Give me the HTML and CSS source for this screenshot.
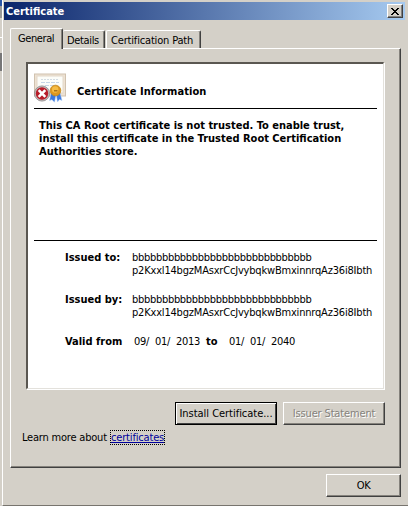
FILE: index.html
```html
<!DOCTYPE html>
<html lang="en">
<head>
<meta charset="utf-8">
<title>Certificate</title>
<link rel="stylesheet" href="styles.css">
</head>
<body>
<div class="behind"><i></i><i></i><i></i><i></i></div>
<main class="window">
  <header class="titlebar">
    <h1>Certificate</h1>
    <button class="close" aria-label="Close"><svg width="8" height="7" viewBox="0 0 8 7" shape-rendering="crispEdges"><path d="M0 0h2v1h1v1h2v-1h1v-1h2v1h-1v1h-1v1h-1v1h1v1h1v1h1v1h-2v-1h-1v-1h-2v1h-1v1h-2v-1h1v-1h1v-1h1v-1h-1v-1h-1v-1h-1z"/></svg></button>
  </header>
  <nav class="tabs">
    <div class="tab active"><span>General</span></div>
    <div class="tab details"><span>Details</span></div>
    <div class="tab path"><span>Certification Path</span></div>
  </nav>
  <section class="panel">
    <article class="sheet">
      <div class="heading">
        <svg class="cert" width="32" height="31" viewBox="0 0 32 31">
          <rect x=".5" y="1" width="31" height="22" fill="#eee2d3" stroke="#d0c2af"/>
          <rect x="3" y="3" width="26" height="17" fill="#fcfdf9" stroke="#e2d8ca"/>
          <path d="M7 6.500h18" stroke="#d3dce3" stroke-dasharray="2 1"/>
          <path d="M7 9.500h18M11 12.500h11" stroke="#c6d6e6" stroke-dasharray="4 1"/>
          <path d="M17 20l-1.500 7.500 2.500-.8 2.500 2.500 1.500-7zM22 21l1.500 8 2-2.500 2.500 1-2-8z" fill="#3978de" stroke="#bcd5f7" stroke-width=".5"/>
          <circle cx="21.500" cy="17.500" r="5.300" fill="#dc9720" stroke="#c48617" stroke-width=".8"/>
          <circle cx="21.200" cy="16.500" r="3.200" fill="#f5bd45"/>
          <path d="M20 17h3.500v1.500H20z" fill="#a87216"/>
          <circle cx="8" cy="20.500" r="7.600" fill="#c2bebe" stroke="#8c8586" stroke-width=".8"/>
          <circle cx="8" cy="20.500" r="6.200" fill="#b81d29"/>
          <path d="M4.700 17.200l6.600 6.600M11.300 17.200l-6.600 6.600" stroke="#fff" stroke-width="2.600"/>
        </svg>
        <h2>Certificate Information</h2>
      </div>
      <div class="warning">
        <p class="w1">This CA Root certificate is not trusted. To enable trust,</p>
        <p class="w2">install this certificate in the Trusted Root Certification</p>
        <p class="w3">Authorities store.</p>
      </div>
      <div class="details-list">
        <div class="field"><b class="to">Issued to:</b><div><p class="bs">bbbbbbbbbbbbbbbbbbbbbbbbbbbbbb</p><p class="key">p2Kxxl14bgzMAsxrCcJvybqkwBmxinnrqAz36i8Ibth</p></div></div>
        <div class="field"><b class="by">Issued by:</b><div><p class="bs">bbbbbbbbbbbbbbbbbbbbbbbbbbbbbb</p><p class="key">p2Kxxl14bgzMAsxrCcJvybqkwBmxinnrqAz36i8Ibth</p></div></div>
        <div class="valid"><b class="from">Valid from</b><span>09/</span><span>01/</span><span class="year">2013</span><b class="until">to</b><span>01/</span><span>01/</span><span class="year">2040</span></div>
      </div>
    </article>
    <div class="actions">
      <button class="btn default"><span class="install">Install Certificate...</span></button>
      <button class="btn" disabled><span class="issuer">Issuer Statement</span></button>
    </div>
    <p class="learn"><span class="more">Learn more about</span><a href="#"><span>certificates</span></a></p>
  </section>
  <button class="btn ok">OK</button>
</main>
</body>
</html>
```
FILE: styles.css
```css
* { box-sizing: border-box; margin: 0; padding: 0; }
body {
  width: 408px; height: 506px; overflow: hidden; display: flex;
  background: #d4d0c8; color: #000;
  font: 11px/13px "DejaVu Sans Condensed", "DejaVu Sans", sans-serif;
  font-stretch: condensed; white-space: nowrap;
}
.behind { width: 2px; background: #d4d0c8; }
.behind i { display: block; height: 6px; background: #2a55a5; }
.behind i + i { height: 12px; background: #999; }
.behind i + i + i { height: 1px; margin-top: 19px; background: #fff; }
.behind i + i + i + i { height: 18px; margin-top: 15px; background: #777; }
.window {
  width: 406px; height: 506px; display: flex; flex-direction: column;
  padding: 1px 4px 0 1px; border-left: 1px solid #fff; border-bottom: 1px solid #77746e;
}
h1, h2 { font-size: 11px; line-height: 13px; }
.titlebar {
  height: 18px; margin: 1px -1px 0 0; padding: 0 2px 0 2px; display: flex;
  align-items: center; justify-content: space-between;
  background: linear-gradient(90deg, #0a246a, #a6caf0);
}
h1 { color: #fff; letter-spacing: 0; }
.close {
  width: 16px; height: 14px; display: flex; align-items: center; justify-content: center;
  background: #d4d0c8; border: 1px solid; border-color: #fff #404040 #404040 #fff;
  box-shadow: inset -1px -1px #808080;
}
.tabs { height: 28px; display: flex; align-items: flex-end; padding-left: 6px; position: relative; z-index: 1; }
.tab {
  height: 18px; border: 1px solid #fff; border-right: 1px solid #404040; border-bottom: 0;
  border-radius: 2px 2px 0 0; box-shadow: inset -1px 0 #85827c; padding: 3px 0 0 4px;
}
.tab.active { width: 53px; height: 21px; margin-bottom: -1px; padding: 3px 0 0 7px; background: #d4d0c8; }
.tab.details { width: 42px; border-left: 0; }
.tab.path { width: 95px; margin-left: 1px; padding-left: 4px; }
.tab.active span { letter-spacing: -.4px; }
.tab.details span { letter-spacing: -.35px; }
.tab.path span { letter-spacing: -.17px; }
.panel {
  width: 391px; height: 420px; margin-left: 6px; padding: 13px 15px 0;
  border: 1px solid #fff; border-right-color: #404040; border-bottom-color: #404040;
  box-shadow: inset -1px -1px #85827c;
}
.sheet {
  width: 358px; height: 327px; background: #fff; padding: 9px 5px 0 6px;
  border: 2px solid #5a5751; border-right: 1px solid #e3e1dc; border-bottom: 1px solid #e3e1dc;
  box-shadow: 1px 1px #fff;
}
.heading { display: flex; height: 36px; width: 343px; border-bottom: 1px solid #000; }
.heading h2 { margin: 12px 0 0 11px; letter-spacing: .07px; }
.warning { height: 132px; width: 343px; padding: 10px 0 0 5px; font-weight: bold; border-bottom: 1px solid #000; }
.w1, .w2, .w3 { letter-spacing: 0; }
.details-list { padding: 10px 0 0 31px; }
.field { display: flex; height: 42px; }
.field b { width: 67px; letter-spacing: 0; }
.bs { letter-spacing: -.3px; }
.key { letter-spacing: -.19px; }
.valid { display: flex; }
.valid b { letter-spacing: 0; }
.valid .from { width: 69px; }
.valid span { width: 21px; letter-spacing: -.3px; }
.valid .year { width: 30px; }
.valid .until { width: 23px; }
.actions { display: flex; gap: 6px; margin: 13px 0 0 149px; }
.btn {
  width: 102px; height: 23px; font: inherit; color: #000; background: #d4d0c8;
  border: 1px solid; border-color: #fff #404040 #404040 #fff; box-shadow: inset -1px -1px #85827c;
}
.btn.default { border-color: #000; box-shadow: inset 1px 1px #fff, inset -1px -1px #404040; }
.btn:disabled { color: #85827c; text-shadow: 1px 1px #fff; }
.install { letter-spacing: -.03px; }
.issuer { letter-spacing: -.15px; }
.learn { display: flex; margin: 6px 0 0 -4px; line-height: 13px; }
.more { width: 89px; letter-spacing: -.2px; }
.learn a { width: 53px; height: 13px; color: #00009c; outline: 1px dotted #000; letter-spacing: -.17px; text-decoration: underline; }
.ok { width: 75px; margin: 6px 0 0 322px; height: 23px; letter-spacing: -.5px; }
```
